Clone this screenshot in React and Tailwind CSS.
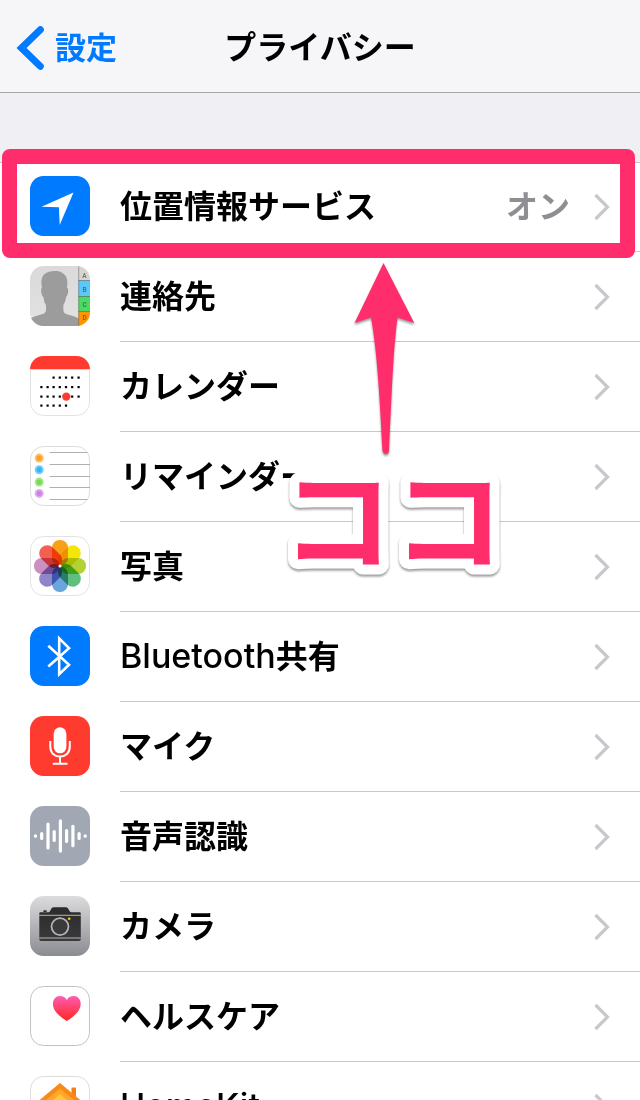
import React from 'react';

const tile = 'block size-[60px] shrink-0';

const LocationIcon = () => (
  <svg viewBox="0 0 60 60" className={tile} aria-hidden="true">
    <rect width="60" height="60" rx="13.5" fill="#007aff" />
    <path d="M43.5 16.5 29.7 49 28.9 31.2 11.5 30.8Z" fill="#fff" />
  </svg>
);

const ContactsIcon = () => (
  <svg viewBox="0 0 60 60" className={tile} aria-hidden="true">
    <defs>
      <clipPath id="contacts-clip">
        <rect width="60" height="60" rx="13.5" />
      </clipPath>
      <linearGradient id="contacts-bg" x1="0" y1="0" x2="0" y2="1">
        <stop offset="0" stopColor="#dadada" />
        <stop offset="1" stopColor="#e2e2e2" />
      </linearGradient>
    </defs>
    <g clipPath="url(#contacts-clip)">
      <rect width="60" height="60" fill="url(#contacts-bg)" />
      <path
        d="M0 60V53C4 50 11 49 14 47.5 17 46 16 41 15.8 38.5 14.5 37 13.8 34.5 13.5 31 12 30.500 11.200 27 11.200 25 11 23 11.500 22 12 21.800 11 17 11 11.500 14 8.500 17 5.500 21 5 25 5 30 5 34 7 36 10.500 37.800 14 37.500 18 37 21.800 38 22 38.500 24 38 26.500 37.500 29 36.800 30.800 36 31 35.800 34 35 37 33.500 38.500 33.300 42 33 46 35 47.500 39 49.500 45 50 49 52.500V60Z"
        fill="#9c9c9c"
      />
      <rect x="48.500" width="12" height="14.500" fill="#d6d5d0" />
      <rect x="48.500" y="14.500" width="12" height="15.500" fill="#5ac8fa" />
      <rect x="48.500" y="30" width="12" height="15.500" fill="#4cd964" />
      <rect x="48.500" y="45.500" width="12" height="15" fill="#ff9500" />
      <path d="M48.500 14.500H60M48.500 30.500H60M48.500 45.500H60" stroke="#555" strokeOpacity=".55" />
      <path d="M48.700 0V60" stroke="#555" strokeOpacity=".45" />
      <g fontFamily="Roboto, sans-serif" fontSize="6.500" textAnchor="middle" fill="#333" fillOpacity=".6">
        <text x="54.500" y="11.500">A</text>
        <text x="54.500" y="25.500">B</text>
        <text x="54.500" y="41">C</text>
        <text x="54.500" y="53.500">D</text>
      </g>
    </g>
  </svg>
);

const calendarDots = [
  [21.5, [23.5, 29.7, 35.9, 42.1, 48.5]],
  [31, [11.3, 17.5, 23.5, 29.7, 35.9, 42.1, 48.5]],
  [40.5, [11.3, 17.5, 23.5, 29.7, 42.1, 48.5]],
  [49.5, [11.3, 17.5, 23.5, 29.7, 35.9]],
];

const CalendarIcon = () => (
  <svg viewBox="0 0 60 60" className={tile} aria-hidden="true">
    <clipPath id="calendar-clip">
      <rect width="60" height="60" rx="13.5" />
    </clipPath>
    <rect x=".5" y=".5" width="59" height="59" rx="13" fill="#fff" stroke="#e2e2e2" />
    <rect width="60" height="13.300" fill="#ff3b30" clipPath="url(#calendar-clip)" />
    {calendarDots.map(([y, xs]) =>
      xs.map((x) => <rect key={`${x}-${y}`} x={x - 1} y={y - 1} width="2.200" height="2.200" fill="#000" />)
    )}
    <circle cx="36.300" cy="40.600" r="4.200" fill="#ff3b30" />
  </svg>
);

const reminderDots = [
  [12.1, '#ff9500'],
  [23.7, '#1badf8'],
  [36.1, '#63da38'],
  [47.4, '#cc73e1'],
];

const RemindersIcon = () => (
  <svg viewBox="0 0 60 60" className={tile} aria-hidden="true">
    <rect x=".5" y=".5" width="59" height="59" rx="13" fill="#fff" stroke="#dcdcdc" />
    {reminderDots.map(([y, color]) => (
      <g key={color} fill={color}>
        <circle cx="9.200" cy={y} r="4.500" fillOpacity=".6" />
        <circle cx="9.200" cy={y} r="2.600" fillOpacity=".75" />
      </g>
    ))}
    <path d="M19.500 6.500H57.500M19.500 18.500H60M19.500 30.500H60M19.500 41.500H60M19.500 53.500H57.500" stroke="#b0b0b0" />
  </svg>
);

const petals = ['#f9a01b', '#f5e60a', '#b3d335', '#5fbf7f', '#6aa5dc', '#8f85c8', '#cb8fc0', '#f4604f'];

const PhotosIcon = () => (
  <svg viewBox="0 0 60 60" className={tile} aria-hidden="true">
    <rect x=".5" y=".5" width="59" height="59" rx="13" fill="#fff" stroke="#e2e2e2" />
    <g className="isolate">
      {petals.map((color, i) => (
        <rect
          key={color}
          x="22"
          y="4"
          width="16"
          height="25.500"
          rx="7.700"
          fill={color}
          className="mix-blend-multiply"
          transform={`rotate(${i * 45} 30 30)`}
        />
      ))}
    </g>
    <circle cx="30" cy="30" r="1.500" fill="#fff" />
  </svg>
);

const BluetoothIcon = () => (
  <svg viewBox="0 0 60 60" className={tile} aria-hidden="true">
    <rect width="60" height="60" rx="13.5" fill="#007aff" />
    <path d="M18.300 19.800 39 38.800 29.200 48.200V12.300L39 22.200 18.300 40.500" fill="none" stroke="#fff" strokeWidth="2.600" />
  </svg>
);

const MicIcon = () => (
  <svg viewBox="0 0 60 60" className={tile} aria-hidden="true">
    <rect width="60" height="60" rx="13.5" fill="#ff3b30" />
    <rect x="23.700" y="11.300" width="12.700" height="26" rx="6.350" fill="#fff" />
    <path
      d="M20.300 25V30.500C20.300 37 24.500 40.500 30 40.500S39.800 37 39.800 30.500V25M30 40.500V47.500M22.700 47.800H37.500"
      fill="none"
      stroke="#fff"
      strokeWidth="2"
    />
  </svg>
);

const soundBars = [
  [5.5, 1.8],
  [11.7, 4],
  [18, 13.5],
  [24.2, 6],
  [30.4, 16.7],
  [36.6, 7],
  [42.9, 11.3],
  [49.1, 4],
  [55.2, 1.8],
];

const SpeechIcon = () => (
  <svg viewBox="0 0 60 60" className={tile} aria-hidden="true">
    <rect width="60" height="60" rx="13.5" fill="#a2a8b3" />
    {soundBars.map(([x, half]) => (
      <rect key={x} x={x - 1.6} y={30 - half} width="3.200" height={half * 2} rx="1.600" fill="#fff" />
    ))}
  </svg>
);

const CameraIcon = () => (
  <svg viewBox="0 0 60 60" className={tile} aria-hidden="true">
    <defs>
      <linearGradient id="camera-bg" x1="0" y1="0" x2="0" y2="1">
        <stop offset="0" stopColor="#dcdcde" />
        <stop offset="1" stopColor="#8b8c92" />
      </linearGradient>
      <linearGradient id="camera-body" x1="0" y1="0" x2="0" y2="1">
        <stop offset="0" stopColor="#2b2b2b" />
        <stop offset="1" stopColor="#3a3a3a" />
      </linearGradient>
    </defs>
    <rect width="60" height="60" rx="13.5" fill="url(#camera-bg)" />
    <path d="M13.300 16V14.800Q13.300 14.200 14 14.200H16Q16.700 14.200 16.700 14.800V16Z" fill="#333" />
    <path
      d="M9.300 17.500Q9.300 16.300 10.500 16.300H18.500C20.500 16.300 21 11.300 23.500 11.300H36C38.500 11.300 39.300 16.300 41.300 16.300H49.500Q50.800 16.300 50.800 17.500V43.300Q50.800 45 49 45H11Q9.300 45 9.300 43.300Z"
      fill="url(#camera-body)"
    />
    <path d="M9.300 19.300H50.800M9.300 42H50.800" stroke="#c4c4c7" strokeWidth=".9" />
    <circle cx="30" cy="30.600" r="9.800" fill="#2b2b2b" />
    <circle cx="30" cy="30.600" r="8.500" fill="#3a3a3a" stroke="#b4b4b8" strokeWidth="1.800" />
    <circle cx="39.200" cy="22.700" r="1.300" fill="#ffcc00" />
  </svg>
);

const HealthIcon = () => (
  <svg viewBox="0 0 60 60" className={tile} aria-hidden="true">
    <linearGradient id="health-heart" x1="0" y1="0" x2="0" y2="1">
      <stop offset="0" stopColor="#ff5db1" />
      <stop offset="1" stopColor="#ff2620" />
    </linearGradient>
    <rect x=".5" y=".5" width="59" height="59" rx="13" fill="#fff" stroke="#c2c2c2" />
    <path
      d="M36.800 35C31 31.500 22.900 25.500 22.900 18 22.900 13 26 10 29.800 10 33 10 35.500 11.500 36.800 14 38.100 11.500 40.600 10 43.800 10 47.600 10 50.700 13 50.700 18 50.700 25.500 42.600 31.500 36.800 35Z"
      fill="url(#health-heart)"
    />
  </svg>
);

const HomeIcon = () => (
  <svg viewBox="0 0 60 60" className={tile} aria-hidden="true">
    <rect x=".5" y=".5" width="59" height="59" rx="13" fill="#fff" stroke="#dcdcdc" />
    <path d="M41.500 20V12.500Q41.500 11.500 42.500 11.500H45Q46 11.500 46 12.500V24Z" fill="#f57f17" />
    <path d="M30 7 54 27H49V50H11V27H6Z" fill="#f98a1a" />
    <path d="M30 12.500 48 27.500H45V46H15V27.500H12Z" fill="#ffa726" />
    <path d="M30 18 41 28V42H19V28Z" fill="#ffca3a" />
  </svg>
);

const items = [
  { label: '位置情報サービス', value: 'オン', Icon: LocationIcon },
  { label: '連絡先', Icon: ContactsIcon },
  { label: 'カレンダー', Icon: CalendarIcon },
  { label: 'リマインダー', Icon: RemindersIcon },
  { label: '写真', Icon: PhotosIcon },
  { latin: 'Bluetooth', label: '共有', Icon: BluetoothIcon },
  { label: 'マイク', Icon: MicIcon },
  { label: '音声認識', Icon: SpeechIcon },
  { label: 'カメラ', Icon: CameraIcon },
  { label: 'ヘルスケア', Icon: HealthIcon },
  { latin: 'HomeKit', Icon: HomeIcon },
];

const SettingsRow = ({ latin, label, value, Icon }) => (
  <li>
    <a href="#" className="flex items-stretch gap-[30px] pl-[30px]">
      <span className="pt-[14px] pb-4">
        <Icon />
      </span>
      <span className="flex flex-1 items-center border-b border-[#c8c7cc] pr-[30px]">
        <span className="flex-1">
          {latin && <span className="text-[34px] font-medium">{latin}</span>}
          {label}
        </span>
        {value && <span className="mr-6 text-[#8e8e93]">{value}</span>}
        <svg viewBox="0 0 16 28" className="h-7 w-4" aria-hidden="true">
          <path d="M1.500 2 13.500 14 1.500 26" fill="none" stroke="#c7c7cc" strokeWidth="3.200" />
        </svg>
      </span>
    </a>
  </li>
);

// Arrow and caption that point at the highlighted row
const Callout = () => (
  <svg
    viewBox="280 258 240 330"
    className="pointer-events-none absolute top-24 left-[280px] h-[330px] w-60 overflow-visible"
  >
    <g className="drop-shadow-[0_2px_1px_rgba(0,0,0,0.4)]">
      <path
        d="M383.500 263 414.300 323 397.500 317.500C393 350 391.500 400 389 451Q388.500 454 386 454T382.500 451C380 400 377 350 371 317.500L354.500 323Z"
        fill="#ff2d6c"
      />
    </g>
    <text
      x="282"
      y="562"
      fontSize="111"
      fontWeight="700"
      fill="#ff2d6c"
      stroke="#fff"
      strokeWidth="20"
      strokeLinejoin="round"
      className="drop-shadow-[0_2px_1px_rgba(0,0,0,0.4)] [paint-order:stroke_fill]"
    >
      ココ
    </text>
  </svg>
);

const App = () => {
  return (
    <div className="h-screen overflow-hidden bg-[#efeff4] font-['Inter','Noto_Sans_CJK_JP',sans-serif] text-[32px] leading-10 font-semibold text-black">
      {/* Navigation bar */}
      <header className="grid grid-cols-[1fr_auto_1fr] items-center border-b border-[#a7a7aa] bg-[#f6f6f9] px-4 pt-7 pb-6">
        <a href="#" className="flex items-center gap-[11px] text-[31px] text-[#007aff]">
          <svg viewBox="0 0 28 44" className="-my-1 h-11 w-7" aria-hidden="true">
            <path d="M24.300 3.700 5.500 22 24.300 40.300" fill="none" stroke="currentColor" strokeWidth="7" strokeLinecap="round" />
          </svg>
          設定
        </a>
        <h1>プライバシー</h1>
      </header>

      {/* Privacy settings */}
      <main className="relative mt-[69px] bg-white">
        <ul className="shadow-[inset_0_1px_0_#c8c7cc]">
          {items.map((item) => (
            <SettingsRow key={item.latin || item.label} {...item} />
          ))}
        </ul>
        <div className="pointer-events-none absolute -top-[13px] right-[5px] left-[2px] h-[109px] rounded-lg border-[15px] border-[#ff2d6c]" />
        <Callout />
      </main>
    </div>
  );
};

export default App;
